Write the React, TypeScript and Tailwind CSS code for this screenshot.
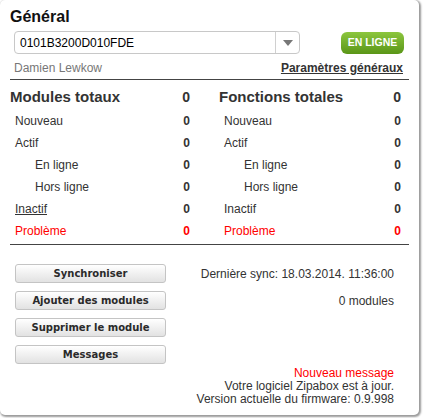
import React from "react";

const F = { fontFamily: '"Liberation Sans", Arial, sans-serif' };
const BF = { fontFamily: '"DejaVu Sans", Verdana, sans-serif' };

type Row = { label: string; value: string; indent?: boolean; red?: boolean; underline?: boolean };

function StatCol({ title, rows, w }: { title: string; rows: Row[]; w: string }) {
  return (
    <div className={`flex flex-col ${w}`}>
      <div className="mb-[2px] flex h-[22px] items-center justify-between">
        <span className="text-[15px] font-bold text-[#333]">{title}</span>
        <span className="text-[14px] font-bold text-[#333]">0</span>
      </div>
      {rows.map((r, i) => (
        <div key={i} className="flex h-[22px] items-center justify-between">
          <span
            className={`text-[12px] ${r.indent ? "pl-[25px]" : "pl-[5px]"} ${r.red ? "text-[#ff0000]" : "text-[#333]"} ${r.underline ? "underline" : ""}`}
          >
            {r.label}
          </span>
          <span className={`text-[12px] font-bold ${r.red ? "text-[#ff0000]" : "text-[#333]"}`}>{r.value}</span>
        </div>
      ))}
    </div>
  );
}

function Btn({ children }: { children: React.ReactNode }) {
  return (
    <div
      style={BF}
      className="flex h-[19px] w-[151px] items-center justify-center rounded-[3px] border border-[#c4c4c4] bg-gradient-to-b from-[#ffffff] to-[#e2e2e2] text-[10px] font-bold text-[#2a2a2a]"
    >
      {children}
    </div>
  );
}

export default function App() {
  const left: Row[] = [
    { label: "Nouveau", value: "0" },
    { label: "Actif", value: "0" },
    { label: "En ligne", value: "0", indent: true },
    { label: "Hors ligne", value: "0", indent: true },
    { label: "Inactif", value: "0", underline: true },
    { label: "Problème", value: "0", red: true },
  ];
  const right: Row[] = [
    { label: "Nouveau", value: "0" },
    { label: "Actif", value: "0" },
    { label: "En ligne", value: "0", indent: true },
    { label: "Hors ligne", value: "0", indent: true },
    { label: "Inactif", value: "0" },
    { label: "Problème", value: "0", red: true },
  ];
  return (
    <div style={F} className="h-[418px] w-[424px] bg-white">
      <div className="flex h-[415px] w-[419px] flex-col rounded-[5px] bg-white pl-[10px] pt-[7px] shadow-[1px_1px_2px_1px_rgba(0,0,0,0.4)]">
        <div className="h-[20px] text-[16px] font-bold leading-[20px] text-[#111]">Général</div>
        <div className="mt-[4px] flex h-[23px] items-start">
          <div className="ml-[4px] flex h-[23px] w-[286px] items-center rounded-[4px] border border-[#c8c8c8] bg-white">
            <span className="flex-1 pl-[5px] text-[12px] text-black">0101B3200D010FDE</span>
            <div className="flex h-full w-[24px] items-center justify-center border-l border-[#d0d0d0]">
              <svg width="10" height="6" viewBox="0 0 10 6">
                <path d="M0 0 L10 0 L5 6 Z" fill="#777" />
              </svg>
            </div>
          </div>
          <div className="ml-[41px] mt-[1px] flex h-[22px] w-[63px] items-center justify-center rounded-[6px] bg-gradient-to-b from-[#8cc63e] to-[#5a9617] text-[10.5px] font-bold text-white">
            EN LIGNE
          </div>
        </div>
        <div className="mt-[6px] flex h-[16px] w-[393px] items-center justify-between">
          <span className="pl-[4px] text-[12px] text-[#777]">Damien Lewkow</span>
          <span className="text-[12px] font-bold text-[#333] underline">Paramètres généraux</span>
        </div>
        <div className="mt-[3px] h-px w-[399px] bg-[#444]" />
        <div className="mt-[6px] flex">
          <StatCol title="Modules totaux" rows={left} w="w-[180px]" />
          <div className="w-[29px]" />
          <StatCol title="Fonctions totales" rows={right} w="w-[182px]" />
        </div>
        <div className="mt-[2px] h-px w-[399px] bg-[#444]" />
        <div className="mt-[19px] flex w-[384px] pl-[5px]">
          <div className="flex flex-col gap-[8px]">
            <Btn>Synchroniser</Btn>
            <Btn>Ajouter des modules</Btn>
            <Btn>Supprimer le module</Btn>
            <Btn>Messages</Btn>
          </div>
          <div className="flex flex-1 flex-col items-end text-[12px] text-[#333]">
            <div className="flex h-[19px] items-center">Dernière sync: 18.03.2014. 11:36:00</div>
            <div className="mt-[8px] flex h-[19px] items-center">0 modules</div>
          </div>
        </div>
        <div className="mt-[3px] flex w-[384px] flex-col items-end text-[12px] leading-[13px] text-[#333]">
          <span className="text-[#ff0000]">Nouveau message</span>
          <span>Votre logiciel Zipabox est à jour.</span>
          <span>Version actuelle du firmware: 0.9.998</span>
        </div>
      </div>
    </div>
  );
}
